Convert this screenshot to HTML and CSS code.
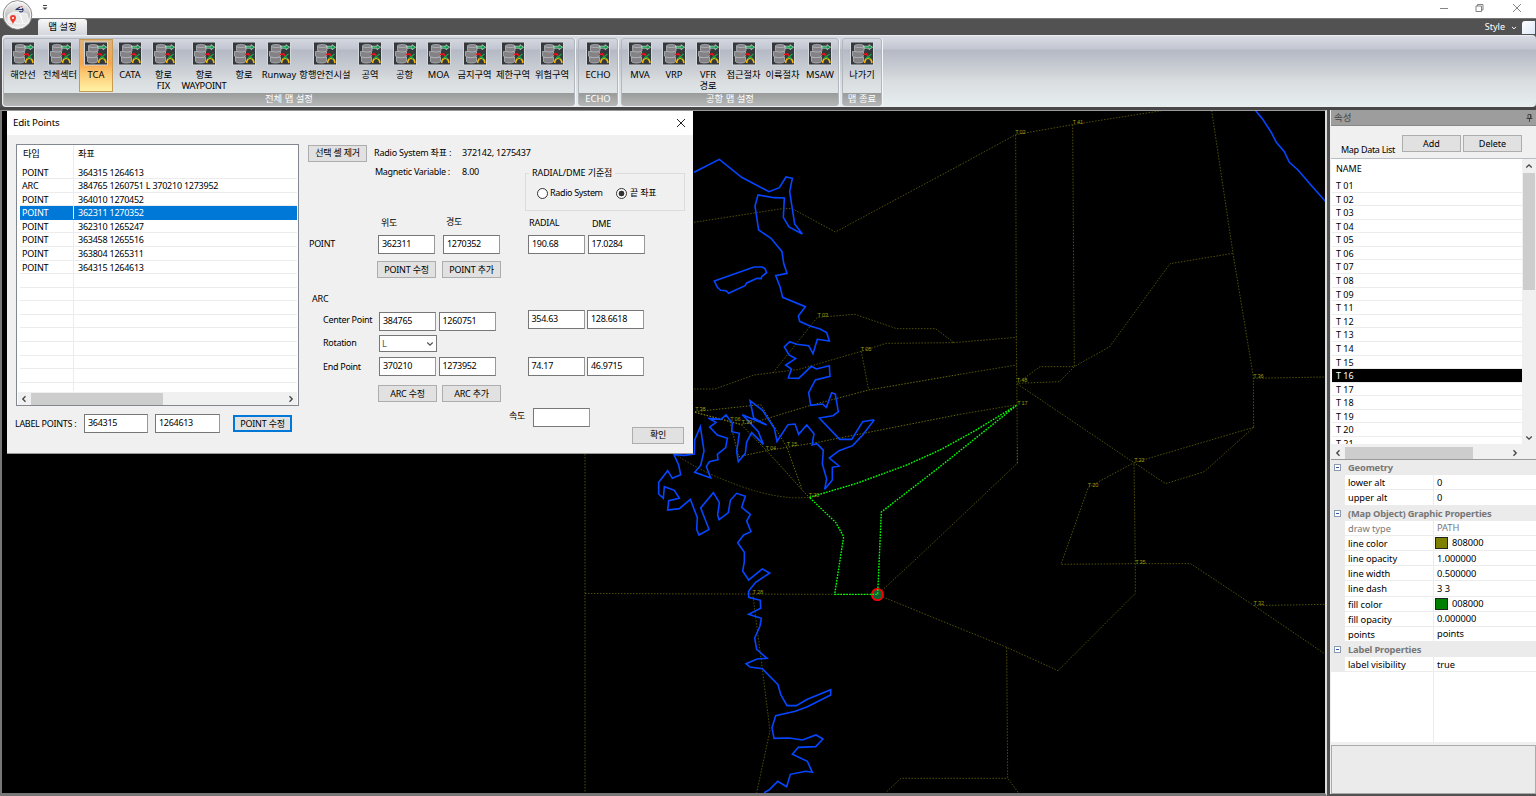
FILE: index.html
```html
<!DOCTYPE html>
<html lang="ko">
<head>
<meta charset="utf-8">
<title>맵 설정</title>
<link rel="stylesheet" href="styles.css">
</head>
<body>
<svg class="defs" width="0" height="0">
  <symbol id="db" viewBox="0 0 24 24">
    <rect x=".5" y=".5" width="23" height="23" fill="#36393c" stroke="#d3d7dc"/>
    <g fill="#858286" stroke="#bcc3cb" stroke-width=".7">
      <path d="M3.500 15.500v4.500c1 2 9 2 10 0v-4.500z"/>
      <path d="M2.500 10v4.500c1 2.200 10 2.200 11 0V10z"/>
      <path d="M4.500 4.500v4.500c1 2 8.500 2 9.500 0V4.500z"/>
      <ellipse cx="9.200" cy="4.500" rx="4.800" ry="1.500"/>
    </g>
    <path d="M14 4.700h5V3.200l3.600 2.500L19 8.200V6.700h-5z" fill="#0aa04a" stroke="#eef5f0" stroke-width=".6"/>
    <path d="M14.500 21.500c1-6.500 6.500-6.500 7.500 0" fill="none" stroke="#f5b800" stroke-width="1.700"/>
    <path d="M16 17l5.500-4.500M17 14l3.500 3.500" fill="none" stroke="#0ba34c" stroke-width="1.400"/>
    <path d="M13 13l3.500-.5 1.500 2" fill="none" stroke="#f01010" stroke-width="1.700"/>
  </symbol>
  <symbol id="left" viewBox="0 0 8 8"><path d="M5.500 1.300L2.800 4l2.700 2.700" fill="none" stroke="#444" stroke-width="1.300"/></symbol>
  <symbol id="right" viewBox="0 0 8 8"><path d="M2.500 1.300L5.200 4 2.500 6.700" fill="none" stroke="#444" stroke-width="1.300"/></symbol>
  <symbol id="up" viewBox="0 0 8 8"><path d="M1.300 5.500L4 2.800l2.700 2.700" fill="none" stroke="#444" stroke-width="1.300"/></symbol>
  <symbol id="down" viewBox="0 0 8 8"><path d="M1.300 2.500L4 5.200l2.700-2.700" fill="none" stroke="currentColor" stroke-width="1.300"/></symbol>
</svg>

<div class="app">
  <header class="titlebar">
    <svg class="orb" width="32" height="32" viewBox="0 0 32 32">
      <defs><linearGradient id="og" x1="0" y1="0" x2="0" y2="1"><stop offset="0" stop-color="#f8f8f8"/><stop offset=".5" stop-color="#c4c4c4"/><stop offset="1" stop-color="#f4f4f4"/></linearGradient></defs>
      <circle cx="15.500" cy="15" r="14.300" fill="url(#og)" stroke="#888"/>
      <circle cx="15.500" cy="15" r="13.200" fill="none" stroke="#fff" stroke-width=".8"/>
      <path d="M6 15l5-3 10 1 4 1 2 9-10 1-11-2z" fill="#e9e9e9" stroke="#fff" stroke-width=".7"/>
      <path d="M18 14l3 9" stroke="#fff"/>
      <path d="M11 24c-1.200-3-3-4-3-6a3 3 0 0 1 6 0c0 2-1.800 3-3 6z" fill="#ee3a2c"/><circle cx="11" cy="18" r="1.100" fill="#fff"/>
      <path d="M14 9.500l4-2.500M13.500 9.500h7M20 8.500c1.500-.5 1.500 3.500-.5 3.500-1 0-2-.4-2-1" fill="none" stroke="#26346b" stroke-width="1.100"/><path d="M18.500 6.700h2" stroke="#d33" stroke-width="1"/>
    </svg>
    <svg class="qat" width="6" height="6" viewBox="0 0 6 6"><path d="M1 .5h4" stroke="#444"/><path d="M.5 2.500h5L3 5z" fill="#444"/></svg>
    <svg class="winbtns" width="84" height="10" viewBox="0 0 84 10" fill="none" stroke="#777" stroke-width=".9"><path d="M1 5.500h8M37 3h5.500v5.500H37zM38.500 3V1.500H44V7h-1.500M74 1l8 8M82 1l-8 8"/></svg>
  </header>
  <nav class="tabs">
    <span class="tab">맵 설정</span>
    <span class="style">Style</span><svg class="stylearrow" width="6" height="6"><use href="#down"/></svg><span class="whitebit"></span>
  </nav>

  <section class="ribbon">
    <div class="panel p1">
      <div class="items">
        <div class="item w36"><svg><use href="#db"/></svg>해안선</div>
        <div class="item w38"><svg><use href="#db"/></svg>전체섹터</div>
        <div class="item w34 on"><svg><use href="#db"/></svg>TCA</div>
        <div class="item w34"><svg><use href="#db"/></svg>CATA</div>
        <div class="item w33"><svg><use href="#db"/></svg><span>항로</span><span>FIX</span></div>
        <div class="item w48"><svg><use href="#db"/></svg><span>항로</span><span>WAYPOINT</span></div>
        <div class="item w32"><svg><use href="#db"/></svg>항로</div>
        <div class="item w38"><svg><use href="#db"/></svg>Runway</div>
        <div class="item w54"><svg><use href="#db"/></svg>항행안전시설</div>
        <div class="item w36"><svg><use href="#db"/></svg>공역</div>
        <div class="item w33"><svg><use href="#db"/></svg>공항</div>
        <div class="item w35"><svg><use href="#db"/></svg>MOA</div>
        <div class="item w37"><svg><use href="#db"/></svg>금지구역</div>
        <div class="item w40"><svg><use href="#db"/></svg>제한구역</div>
        <div class="item w38"><svg><use href="#db"/></svg>위험구역</div>
      </div>
      <div class="cap">전체 맵 설정</div>
    </div>
    <div class="panel p2">
      <div class="items"><div class="item w36"><svg><use href="#db"/></svg>ECHO</div></div>
      <div class="cap">ECHO</div>
    </div>
    <div class="panel p3">
      <div class="items">
        <div class="item w34"><svg><use href="#db"/></svg>MVA</div>
        <div class="item w34"><svg><use href="#db"/></svg>VRP</div>
        <div class="item w34"><svg><use href="#db"/></svg><span>VFR</span><span>경로</span></div>
        <div class="item w37"><svg><use href="#db"/></svg>접근절차</div>
        <div class="item w41"><svg><use href="#db"/></svg>이륙절차</div>
        <div class="item w34"><svg><use href="#db"/></svg>MSAW</div>
      </div>
      <div class="cap">공항 맵 설정</div>
    </div>
    <div class="panel p4">
      <div class="items"><div class="item w36"><svg><use href="#db"/></svg>나가기</div></div>
      <div class="cap">맵 종료</div>
    </div>
  </section>

  <main class="main">
    <section class="mapwrap">
      <svg class="map" width="1323" height="682" viewBox="2 111 1323 682">
        <rect x="2" y="111" width="1323" height="682"/>
        <g class="olive">
          <path d="M585 454V793M585 593.500L877 594.500"/>
          <g transform="translate(580 110) scale(.33333)">
            <path d="M342 337L600 297 635 295 766 366 1140 165M342 837H405L522 795 657 778 844 724 918 700 1120 698M579 788L712 622 825 613 950 656H1066L1122 698M844 724L866 840"/>
            <path class="br" d="M345 907L485 943 540 932 692 886 866 840 1140 793M476 1040L560 1022 718 996 1140 913M345 905L542 884 620 1010 665 1135M345 907L485 945 560 1022 685 1160M450 935L476 1040"/>
          </g>
          <g transform="translate(640 380) scale(.33333)"><path d="M105 222Q180 275 300 318T508 352"/></g>
          <g transform="translate(940 110) scale(.33333)">
            <path d="M60 165L227 74 398 44 665 2M40 698L230 682M60 793L230 765M60 913L231 884M232 1060L231 884 229 682 227 74M398 44L403 770H300L232 820 358 815 403 770 509 710 690 461 879 430M815 2L879 430 940 800 941 952M940 805L1155 801M232 822L582 1058 941 952"/>
          </g>
          <g transform="translate(680 560) scale(.33333)"><path d="M218 100L232 210 247 326 270 512 230 698M592 104L790 185 980 262 1134 332M980 262L983 655 1015 698M620 695L663 655H983M592 104L705 0 1012 -290V-340"/></g>
          <g transform="translate(1000 430) scale(.33333)"><path d="M174 722L406 490V400L402 98M761 -8L613 125 497 161 402 98 265 172 183 403 406 401H572L762 527 975 672M762 527L975 523"/></g>
        </g>
        <g class="coast">
          <g transform="translate(580 110) scale(.33333)">
            <path d="M342 187L418 148 485 202 567 245 598 233 618 201 637 205 629 245 644 342 667 372 627 351 610 322 613 264 582 263 534 255 525 288 536 360 573 385 606 425 611 460 621 490 587 497 600 530 608 562 676 590 655 618 659 634 690 648 720 657 740 668 748 693 712 688 699 731 686 707 650 703 629 695 613 711 627 735 647 746 617 765 634 777 625 804 656 805 694 769 709 777 748 767 750 799 706 810 686 848 692 886 727 882 739 892 755 848 766 852 775 905 759 917 718 924 779 988H815L848 935 882 929"/>
            <path d="M403 513L522 471H546L555 476 560 488 545 500 544 506 531 505 500 519 495 527 446 550 438 542 422 541 412 532Z"/>
          </g>
          <g transform="translate(640 380) scale(.33333)">
            <path d="M703 119L668 165 638 197 597 212 568 234 597 258 577 262V300L554 328 560 297 547 252 550 211 531 191 516 195 522 161 500 135 476 163 465 132 444 134 411 184 403 145 367 90 330 62 341 114 380 135 307 104 355 155 370 193 335 158 320 186 316 220 295 245 290 215 298 160 275 155 277 130 258 105 243 118 205 115 228 127 209 141 232 165 262 175 257 203 232 223 234 239 208 245 199 260 212 294 164 277 182 256 192 213 181 140 164 180 163 222 133 226 102 224 116 255 122 284 97 295 83 272 56 307V342L70 355 73 320 103 331 118 355 86 362 83 390 118 386 151 358 172 413 170 448 177 465 207 448 182 384 220 338 238 368 233 405 237 419 265 398 271 361 290 340 316 349 305 382 331 403 320 423 333 455 311 465 293 488 313 517V545L308 573 326 600 367 567 389 579 347 607 326 633"/>
          </g>
          <g transform="translate(680 560) scale(.33333)">
            <path d="M206 93V112L241 121 242 145 206 163 244 175 240 198 224 234 230 268 261 295 231 297 198 311 210 321 247 326 294 374 302 403 321 437H349L382 418 452 389V405L382 440 346 454 287 467 276 503 282 535 328 534 367 540 408 525 429 537 407 560 355 562 337 583 382 604 397 637 377 634 331 643 320 680 293 664 267 690 252 698"/>
          </g>
          <g transform="translate(940 110) scale(.33333)"><path d="M947 2L967 26 993 66 1009 97 1033 125 1048 157 1074 180 1110 222 1157 275"/></g>
        </g>
        <circle cx="877.400" cy="594.600" r="5.600" fill="#116034" stroke="#f00" stroke-width="1.800"/>
        <g class="green" transform="translate(640 380) scale(.33333)"><path d="M508 352L650 310 800 255 900 210 1000 155 1131 75 900 260 724 396 713 643H584L611 470 587 427Z"/></g>
        <g class="lbl">
          <text x="822.700" y="317">T 03</text><text x="866" y="351">T 05</text><text x="700.300" y="411.300">T 38</text><text x="735.300" y="421.300">T 06</text><text x="746.700" y="424.300">T 39</text><text x="770.700" y="450">T 04</text><text x="792" y="446.300">T 15</text>
          <text x="814" y="497">T 20</text><text x="757.700" y="594">T 28</text>
          <text x="1020.300" y="133.700">T 02</text><text x="1077.700" y="124.300">T 41</text><text x="1022" y="382.300">T 48</text><text x="1022.300" y="405">T 17</text><text x="1258.300" y="378">T 36</text>
          <text x="1139.300" y="461.700">T 22</text><text x="1093" y="487.300">T 20</text><text x="1140.300" y="563.700">T 35</text><text x="1258.700" y="605.300">T 32</text>
        </g>
      </svg>

      <div class="dialog">
        <div class="dtitle"><span>Edit Points</span><svg width="10" height="10" viewBox="0 0 10 10"><path d="M1 1l8 8M9 1L1 9" stroke="#222" stroke-width="1"/></svg></div>
        <div class="dbody">
          <div class="dleft">
            <div class="list">
              <div class="lhead"><span>타입</span><span>좌표</span></div>
              <div class="lrow"><span>POINT</span><span>364315 1264613</span></div>
              <div class="lrow"><span>ARC</span><span>384765 1260751 L 370210 1273952</span></div>
              <div class="lrow"><span>POINT</span><span>364010 1270452</span></div>
              <div class="lrow sel"><span>POINT</span><span>362311 1270352</span></div>
              <div class="lrow"><span>POINT</span><span>362310 1265247</span></div>
              <div class="lrow"><span>POINT</span><span>363458 1265516</span></div>
              <div class="lrow"><span>POINT</span><span>363804 1265311</span></div>
              <div class="lrow"><span>POINT</span><span>364315 1264613</span></div>
              <div class="lrow"><span></span><span></span></div><div class="lrow"><span></span><span></span></div><div class="lrow"><span></span><span></span></div><div class="lrow"><span></span><span></span></div><div class="lrow"><span></span><span></span></div><div class="lrow"><span></span><span></span></div><div class="lrow"><span></span><span></span></div><div class="lrow"><span></span><span></span></div><div class="lrow last"><span></span><span></span></div>
              <div class="hscroll"><svg width="8" height="8"><use href="#left"/></svg><i class="thumb t1"></i><svg class="end" width="8" height="8"><use href="#right"/></svg></div>
            </div>
            <div class="labelrow"><span>LABEL POINTS :</span><div class="inp w64">364315</div><div class="inp w64b">1264613</div><div class="btn focus">POINT 수정</div></div>
          </div>
          <div class="dright">
            <div class="top">
              <div class="info">
                <div class="inforow"><div class="btn b59">선택 셀 제거</div><span class="k">Radio System 좌표 :</span><span>372142, 1275437</span></div>
                <div class="inforow r2"><span class="k2">Magnetic Variable :</span><span>8.00</span></div>
              </div>
              <div class="group"><span class="legend">RADIAL/DME 기준점</span>
                <div class="radios"><i class="radio"></i><span class="r1">Radio System</span><i class="radio checked"></i><span>끝 좌표</span></div>
              </div>
            </div>
            <div class="row heads"><span class="h1">위도</span><span class="h2">경도</span><span class="h3">RADIAL</span><span class="h4">DME</span></div>
            <div class="row pt"><span class="lab l0">POINT</span><div class="inp">362311</div><div class="inp g7">1270352</div><div class="inp g27">190.68</div><div class="inp g2">17.0284</div></div>
            <div class="row bt1"><div class="btn b59">POINT 수정</div><div class="btn b59">POINT 추가</div></div>
            <div class="row arc"><span>ARC</span></div>
            <div class="row cp"><span class="lab">Center Point</span><div class="inp">384765</div><div class="inp g2">1260751</div><div class="inp g32 up2">354.63</div><div class="inp g2 up2">128.6618</div></div>
            <div class="row rot"><span class="lab">Rotation</span><div class="combo">L<svg width="8" height="8"><use href="#down"/></svg></div></div>
            <div class="row ep"><span class="lab">End Point</span><div class="inp">370210</div><div class="inp g2">1273952</div><div class="inp g32">74.17</div><div class="inp g2">46.9715</div></div>
            <div class="row bt2"><div class="btn b59">ARC 수정</div><div class="btn b59">ARC 추가</div></div>
            <div class="row spd"><span>속도</span><div class="inp"></div></div>
            <div class="row ok"><div class="btn">확인</div></div>
          </div>
        </div>
      </div>
    </section>

    <aside class="side">
      <div class="shead"><span>속성</span><svg width="7" height="8" viewBox="0 0 7 8"><path d="M2 .5h3v4H2zM.5 4.500h6M3.500 4.500V8M4.500.5v4" fill="none" stroke="#333" stroke-width=".8"/></svg></div>
      <div class="stool"><span>Map Data List</span><div class="btn">Add</div><div class="btn">Delete</div></div>
      <div class="slist">
        <div class="names">
          <div class="nhead">NAME</div>
          <div class="n">T 01</div><div class="n">T 02</div><div class="n">T 03</div><div class="n">T 04</div><div class="n">T 05</div><div class="n">T 06</div><div class="n">T 07</div><div class="n">T 08</div><div class="n">T 09</div><div class="n">T 11</div><div class="n">T 12</div><div class="n">T 13</div><div class="n">T 14</div><div class="n">T 15</div><div class="n nsel">T 16</div><div class="n">T 17</div><div class="n">T 18</div><div class="n">T 19</div><div class="n">T 20</div><div class="n">T 21</div>
        </div>
        <div class="vscroll"><svg width="8" height="8"><use href="#up"/></svg><i></i><svg class="end" width="8" height="8"><use href="#down"/></svg></div>
      </div>
      <div class="shs"><svg width="8" height="8"><use href="#left"/></svg><i></i><svg width="8" height="8"><use href="#right"/></svg></div>
      <div class="props">
        <div class="cat"><i class="minus"></i>Geometry</div>
        <div class="p"><span>lower alt</span><span>0</span></div>
        <div class="p"><span>upper alt</span><span>0</span></div>
        <div class="cat"><i class="minus"></i>(Map Object) Graphic Properties</div>
        <div class="p dim"><span>draw type</span><span>PATH</span></div>
        <div class="p"><span>line color</span><span><i class="sw olv"></i>808000</span></div>
        <div class="p"><span>line opacity</span><span>1.000000</span></div>
        <div class="p"><span>line width</span><span>0.500000</span></div>
        <div class="p"><span>line dash</span><span>3 3</span></div>
        <div class="p"><span>fill color</span><span><i class="sw grn"></i>008000</span></div>
        <div class="p"><span>fill opacity</span><span>0.000000</span></div>
        <div class="p"><span>points</span><span>points</span></div>
        <div class="cat"><i class="minus"></i>Label Properties</div>
        <div class="p"><span>label visibility</span><span>true</span></div>
        <div class="rest"></div>
      </div>
      <div class="desc"></div>
    </aside>
  </main>
</div>
</body>
</html>
```
FILE: styles.css
```css
* { box-sizing: border-box; }
body { margin: 0; overflow: hidden; font: 9px/12px "Noto Sans", "Noto Sans CJK KR", sans-serif; color: #000; }
i { display: block; }
span, .btn, .n { white-space: nowrap; }
.defs { position: absolute; }
.app { width: 1536px; height: 796px; display: flex; flex-direction: column; background: #525252; }

.titlebar { position: relative; z-index: 2; height: 18px; background: #fff; display: flex; }
.orb { position: absolute; left: 2px; top: 0; }
.qat { margin: 5px 0 0 42px; }
.winbtns { margin: 3px 13px 0 auto; }
.tabs { height: 17px; background: #525252; border-top: 1px solid #777; display: flex; align-items: center; color: #fff; }
.tab { align-self: flex-end; margin-left: 38px; width: 49px; height: 16px; line-height: 15px; font-size: 9.5px; text-align: center; color: #000; background: linear-gradient(#f7f8f9, #d3d6dc); border-radius: 3px 3px 0 0; }
.style { margin-left: auto; font-size: 9px; }
.stylearrow { margin: 1px 5px 0 6px; }
.whitebit { width: 13px; height: 13px; background: linear-gradient(135deg, #fff, #dde8f8); border-radius: 3px 0 0 0; margin-top: 1px; margin-right: 1px; }

.ribbon { height: 72px; margin-left: 2px; padding: 2px 0 0 0; border: 1px solid #eceef2; border-right: 0; border-radius: 4px; background: linear-gradient(#d9dce4 0, #c2c6d1 13px, #b4b9c5 14px, #c6cad1 30px, #d9dddf 45px, #e6eeef 70px); display: flex; gap: 3px; }
.panel { height: 68px; border: 1px solid #b2b6bd; border-radius: 3px; box-shadow: 1px 0 0 #f4f5f7; display: flex; flex-direction: column; flex: none; }
.p1 { width: 572px; } .p2 { width: 40px; } .p3 { width: 218px; } .p4 { width: 40px; }
.items { flex: 1; display: flex; padding-left: 1px; }
.item { height: 53px; padding-top: 2px; text-align: center; line-height: 10.500px; font-size: 9.3px; white-space: nowrap; display: flex; flex-direction: column; align-items: center; flex: none; }
.item svg { width: 24px; height: 25px; margin-bottom: 4px; flex: none; }
.on { background: linear-gradient(#dab47e, #f7a64c 45%, #fdc873 65%, #fff3a5); border: 1px solid #c79a52; padding-top: 1px; }
.w32 { width: 32px; } .w33 { width: 33px; } .w34 { width: 34px; } .w35 { width: 35px; } .w36 { width: 36px; } .w37 { width: 37px; } .w38 { width: 38px; } .w40 { width: 40px; } .w41 { width: 41px; } .w48 { width: 48px; letter-spacing: -.3px; } .w54 { width: 54px; }
.cap { height: 12px; line-height: 11px; text-align: center; color: #fff; font-size: 9.4px; background: linear-gradient(#999b9b, #b4b6b6); }

.main { height: 689px; display: flex; border-top: 3px solid #484848; }
.mapwrap { position: relative; width: 1327px; border-top: 1px solid #999; border-left: 2px solid #777; border-right: 2px solid #ddd; border-bottom: 3px solid #777; flex: none; background: #000; }
.map { display: block; }
.map path { vector-effect: non-scaling-stroke; fill: none; }
.olive path { stroke: #66660a; stroke-width: .8; stroke-dasharray: 1.500 1.500; }
.olive .br { stroke: #84840c; }
.coast path { stroke: #0546ff; stroke-width: 1.600; }
.green path { stroke: #0f0; stroke-width: 1.400; stroke-dasharray: 1.700 1.200; }
.lbl { fill: #9a9a0c; font: 5.600px "Liberation Sans", sans-serif; text-anchor: middle; letter-spacing: -.2px; }

.dialog { position: absolute; left: 5px; top: 0; width: 686px; height: 343px; background: #f0f0f0; border-bottom: 1px solid #999; letter-spacing: -.2px; }
.dtitle { height: 24px; background: #fff; display: flex; justify-content: space-between; align-items: center; padding: 0 7px 0 6px; font-size: 9.800px; letter-spacing: -.2px; }
.dbody { display: flex; }
.dleft { width: 301px; padding: 9px 0 0 9px; }
.list { width: 283px; height: 262px; border: 1px solid #828790; background: #fff; padding: 0 1px; overflow: hidden; display: flex; flex-direction: column; }
.lhead, .lrow { display: flex; flex: none; }
.lhead { height: 20.500px; line-height: 18px; font-size: 9.300px; }
.lrow { height: 13.580px; line-height: 13px; border-bottom: 1px solid #ececec; margin-left: 2px; }
.lrow span:first-child, .lhead span:first-child { width: 54px; padding-left: 2px; border-right: 1px solid #ececec; }
.lhead span:first-child { width: 56px; padding-left: 5px; }
.lrow span:last-child, .lhead span:last-child { padding-left: 4px; letter-spacing: -.25px; }
.sel { background: #0078d7; color: #fff; border-color: #0078d7; }
.last { height: 8px; border: 0; }
.hscroll { height: 13px; margin-top: auto; background: #f0f0f0; display: flex; align-items: center; padding: 0 2px; flex: none; }
.end { margin-left: auto; color: #444; }
.thumb { background: #cdcdcd; height: 12px; }
.t1 { width: 132px; margin-left: 3px; }
.labelrow { display: flex; margin-top: 8px; }
.labelrow span { width: 69px; line-height: 20px; margin-left: -1px; letter-spacing: -.3px; }
.inp { width: 57px; height: 19px; border: 1px solid #777; border-right-color: #999; background: #fff; padding-left: 3px; line-height: 15px; flex: none; letter-spacing: -.3px; }
.w64 { width: 64px; } .w64b { width: 65px; margin-left: 7px; }
.btn { border: 1px solid #adadad; background: #e1e1e1; height: 17px; line-height: 14px; text-align: center; flex: none; }
.focus { width: 59px; border: 1px solid #0078d7; box-shadow: inset 0 0 0 1px #0078d7; margin: 1px 0 0 13px; line-height: 15px; }
.b59 { width: 59px; }
.dright { width: 385px; }
.top { display: flex; height: 76px; }
.info { width: 217px; padding-top: 10px; }
.inforow { display: flex; height: 18px; line-height: 16px; }
.inforow span { flex: none; }
.k { width: 88px; margin-left: 7px; }
.k2 { width: 87px; margin-left: 67px; letter-spacing: -.3px; }
.r2 { line-height: 17px; }
.group { width: 160px; height: 38px; margin-top: 38px; border: 1px solid #dcdcdc; display: flex; flex-direction: column; }
.legend { margin: -7px auto 0 3px; padding: 0 3px; background: #f0f0f0; line-height: 12px; letter-spacing: -.1px; }
.radios { display: flex; align-items: center; margin: 8px 0 0 11px; height: 12px; }
.radio { width: 11px; height: 11px; border: 1px solid #333; border-radius: 50%; background: #fff; margin-right: 2px; flex: none; }
.checked { background: radial-gradient(#333 0 2.600px, #fff 3.200px); margin-right: 3px; }
.r1 { width: 66px; letter-spacing: -.35px; }
.row { display: flex; }
.heads { height: 24px; padding: 6px 0 0 73px; }
.h1 { width: 65px; } .h2 { width: 83px; margin-top: -1px; } .h3 { width: 63px; } .h4 { margin-top: 1px; }
.lab { width: 56px; margin-left: 15px; line-height: 15px; flex: none; letter-spacing: -.3px; }
.l0 { width: 69px; margin-left: 1px; line-height: 18px; }
.g7 { margin-left: 8px; } .g2 { margin-left: 2.500px; } .g27 { margin-left: 28px; } .g32 { margin-left: 32px; }
.bt1 { margin: 7px 0 0 69px; gap: 6px; height: 17px; }
.arc { margin: 15px 0 0 4px; height: 12px; }
.cp { margin-top: 7px; height: 19px; }
.up2 { margin-top: -2px; }
.rot { margin-top: 4px; height: 17px; }
.combo { width: 58px; height: 17px; border: 1px solid #777; background: #fff; padding: 0 2px 0 2px; line-height: 15px; display: flex; justify-content: space-between; align-items: center; color: #555; }
.ep { margin-top: 5px; height: 19px; }
.ep .lab { line-height: 20px; }
.bt2 { margin: 9px 0 0 70px; gap: 5px; height: 17px; }
.bt2 .btn, .bt1 .btn { line-height: 15px; }
.spd { margin: 6px 0 0 201px; height: 19px; line-height: 16px; }
.spd span { width: 24px; }
.ok { margin: 0 9px 0 auto; justify-content: flex-end; }
.ok .btn { width: 52px; }

.side { width: 206px; margin-left: 3px; background: #f0f0f0; border-left: 1px solid #eee; display: flex; flex-direction: column; height: 684px; }
.shead { height: 16px; background: #9d9d9d; border-bottom: 1px solid #888; color: #444; display: flex; justify-content: space-between; align-items: center; padding: 0 3px; flex: none; font-size: 9.5px; line-height: 13px; }
.stool { height: 33px; display: flex; padding: 9px 0 0 10px; flex: none; border-bottom: 1px solid #b9bdc4; letter-spacing: -.3px; }
.stool span { width: 61px; margin-top: 9px; }
.stool .btn { width: 59px; margin-right: 2px; line-height: 15px; letter-spacing: 0; }
.slist { height: 287px; display: flex; flex: none; overflow: hidden; }
.names { width: 191px; height: 285px; background: #fff; overflow: hidden; padding-left: 1px; display: flex; flex-direction: column; }
.nhead { height: 20px; padding: 4px 0 0 4px; flex: none; }
.n { height: 13.590px; line-height: 13px; padding-left: 4px; border-bottom: 1px solid #ececec; flex: none; }
.nsel { background: #000; color: #fff; }
.vscroll { width: 14px; display: flex; flex-direction: column; align-items: center; padding-top: 3px; }
.vscroll i { width: 12px; height: 117px; margin-top: 3px; background: #cdcdcd; }
.vscroll .end { margin: auto 0 4px; }
.shs { height: 14px; display: flex; align-items: center; flex: none; padding-left: 3px; border-bottom: 1px solid #999; }
.shs i { width: 128px; height: 12px; margin: 0 38px 0 3px; background: #cdcdcd; }
.props { height: 282px; background: #fff; font-size: 9.3px; flex: none; display: flex; flex-direction: column; overflow: hidden; letter-spacing: -.05px; }
.cat { height: 15.180px; line-height: 15px; background: #ebebeb; color: #777; font-weight: bold; letter-spacing: -.15px; display: flex; align-items: center; flex: none; }
.minus { width: 7px; height: 7px; border: 1px solid #8c9ab0; background: linear-gradient(#3c55a0, #3c55a0) center/3px 1px no-repeat #fff; margin: 0 7px 0 3px; }
.p { height: 15.180px; line-height: 15px; display: flex; border-left: 14px solid #ebebeb; flex: none; }
.p span { padding-left: 3px; border-bottom: 1px solid #ececec; }
.p span:first-child { width: 89px; border-right: 1px solid #ececec; }
.p span:last-child { flex: 1; display: flex; align-items: center; }
.dim { color: #777; }
.sw { width: 13px; height: 12px; border: 1px solid #222; margin: 0 4px 0 -2px; }
.olv { background: #808000; } .grn { background: #008000; }
.rest { flex: 1; width: 103px; border-right: 1px solid #ececec; }
.desc { margin-top: 3px; flex: 1; background: #ebebeb; border: 1px solid #aaa; }
```
